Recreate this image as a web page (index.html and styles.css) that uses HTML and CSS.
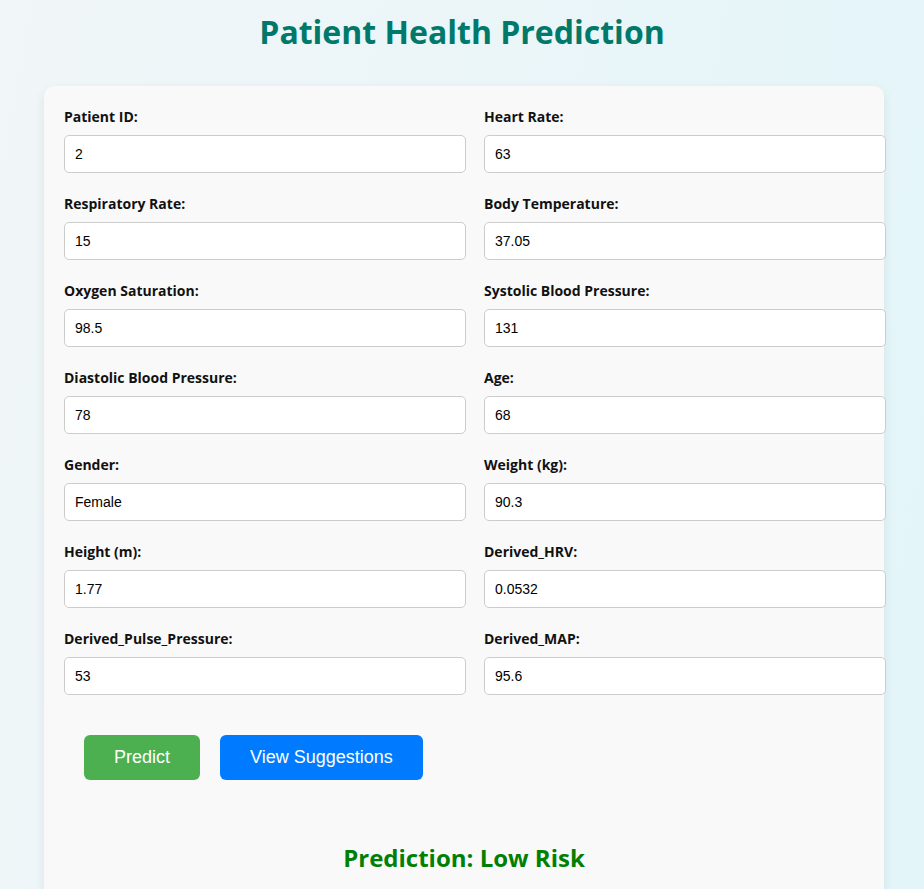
FILE: index.html
```html
<!DOCTYPE html>
<html lang="en">
<head>
<meta charset="utf-8">
<title>Patient Health Prediction</title>
<link rel="stylesheet" href="styles.css">
</head>
<body>
<h1 class="title">Patient Health Prediction</h1>
<div class="card">
  <form class="form-grid">
    <div class="field"><label>Patient ID:</label><input type="text" value="2"></div>
    <div class="field"><label>Heart Rate:</label><input type="text" value="63"></div>
    <div class="field"><label>Respiratory Rate:</label><input type="text" value="15"></div>
    <div class="field"><label>Body Temperature:</label><input type="text" value="37.05"></div>
    <div class="field"><label>Oxygen Saturation:</label><input type="text" value="98.5"></div>
    <div class="field"><label>Systolic Blood Pressure:</label><input type="text" value="131"></div>
    <div class="field"><label>Diastolic Blood Pressure:</label><input type="text" value="78"></div>
    <div class="field"><label>Age:</label><input type="text" value="68"></div>
    <div class="field"><label>Gender:</label><input type="text" value="Female"></div>
    <div class="field"><label>Weight (kg):</label><input type="text" value="90.3"></div>
    <div class="field"><label>Height (m):</label><input type="text" value="1.77"></div>
    <div class="field"><label>Derived_HRV:</label><input type="text" value="0.0532"></div>
    <div class="field"><label>Derived_Pulse_Pressure:</label><input type="text" value="53"></div>
    <div class="field"><label>Derived_MAP:</label><input type="text" value="95.6"></div>
  </form>
  <div class="buttons">
    <button class="btn btn-green" type="button">Predict</button>
    <button class="btn btn-blue" type="button">View Suggestions</button>
  </div>
  <h2 class="result">Prediction: Low Risk</h2>
</div>
</body>
</html>
```
FILE: styles.css
```css
html, body {
  margin: 0;
  padding: 0;
  height: 889px;
  overflow: hidden;
}
body {
  background: linear-gradient(100deg, #f1f6f8 0%, #e3f5f9 100%);
  font-family: "Open Sans", "Liberation Sans", sans-serif;
}
.title {
  margin: 0;
  padding-top: 8px;
  height: 86px;
  box-sizing: border-box;
  text-align: center;
  font-size: 32px;
  line-height: 48px;
  font-weight: 700;
  color: #00796b;
}
.card {
  margin-left: 44px;
  width: 840px;
  height: 820px;
  box-sizing: border-box;
  padding: 20px;
  background: #f9f9f9;
  border-radius: 10px;
  box-shadow: 0 4px 12px rgba(0, 0, 0, 0.08);
}
.form-grid {
  display: grid;
  grid-template-columns: 400px 400px;
  column-gap: 20px;
  row-gap: 20px;
}
.field {
  display: flex;
  flex-direction: column;
}
.field label {
  font-size: 14px;
  line-height: 21px;
  font-weight: 700;
  color: #111;
  margin-bottom: 8px;
}
.field input {
  width: 402px;
  height: 38px;
  box-sizing: border-box;
  padding: 10px;
  border: 1px solid #cccccc;
  border-radius: 5px;
  background: #fff;
  font-family: "Liberation Sans", Arial, sans-serif;
  font-size: 14px;
  color: #000;
}
.buttons {
  display: flex;
  gap: 20px;
  padding: 0 20px;
  margin-top: 40px;
}
.btn {
  height: 45px;
  padding: 0 30px;
  border: none;
  border-radius: 6px;
  color: #fff;
  font-family: "Liberation Sans", Arial, sans-serif;
  font-size: 18px;
}
.btn-green { background: #4caf50; }
.btn-blue { background: #007bff; }
.result {
  margin: 60px 0 0;
  text-align: center;
  font-size: 24px;
  line-height: 36px;
  font-weight: 700;
  color: #008000;
}
```
